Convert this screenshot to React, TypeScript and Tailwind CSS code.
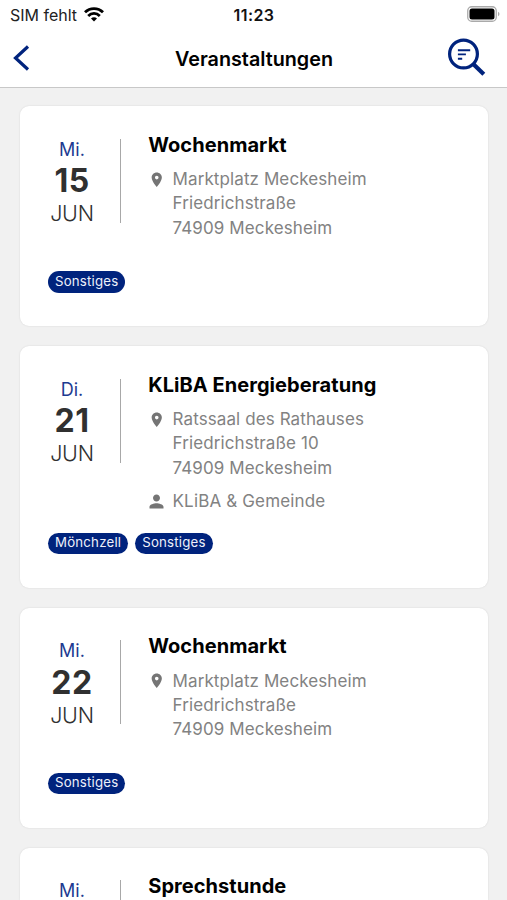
type Event = {
  weekday: string;
  day: string;
  month: string;
  title: string;
  address: string[];
  host?: string;
  tags: string[];
};

const events: Event[] = [
  {
    weekday: "Mi.",
    day: "15",
    month: "JUN",
    title: "Wochenmarkt",
    address: ["Marktplatz Meckesheim", "Friedrichstraße", "74909 Meckesheim"],
    tags: ["Sonstiges"],
  },
  {
    weekday: "Di.",
    day: "21",
    month: "JUN",
    title: "KLiBA Energieberatung",
    address: ["Ratssaal des Rathauses", "Friedrichstraße 10", "74909 Meckesheim"],
    host: "KLiBA & Gemeinde",
    tags: ["Mönchzell", "Sonstiges"],
  },
  {
    weekday: "Mi.",
    day: "22",
    month: "JUN",
    title: "Wochenmarkt",
    address: ["Marktplatz Meckesheim", "Friedrichstraße", "74909 Meckesheim"],
    tags: ["Sonstiges"],
  },
];

function WifiIcon() {
  return (
    <svg className="h-[15px] w-5" viewBox="0 0 20 15" fill="none" stroke="#000" strokeWidth="2.800">
      <path d="M1 5.300C6 .3 14 .3 19 5.300" />
      <path d="M4.200 8.900c3.300-3.300 8.300-3.300 11.600 0" />
      <path d="M10 14.400 7 11.500c1.700-1.600 4.300-1.600 6 0z" fill="#000" stroke="none" />
    </svg>
  );
}

function BatteryIcon() {
  return (
    <svg className="h-4 w-[33px]" viewBox="0 0 33 16">
      <rect x=".75" y=".75" width="28.500" height="14.500" rx="4" fill="#fff" stroke="#aaa" strokeWidth="1.300" />
      <rect x="2.500" y="2.500" width="25" height="11" rx="2.500" fill="#000" />
      <path d="M31 5.800c2 .8 2 3.600 0 4.400z" fill="#aaa" />
    </svg>
  );
}

function SearchIcon() {
  return (
    <svg className="h-10 w-10" viewBox="0 0 40 40" fill="none" stroke="#00237d">
      <circle cx="16.500" cy="16" r="13.900" strokeWidth="3.200" />
      <path d="m26 25.700 10.800 10.500" strokeWidth="4.200" />
      <path d="M10.900 12.200h12.300M10.900 16.400h8M10.900 20.700h4.300" strokeWidth="1.900" />
    </svg>
  );
}

function PinIcon() {
  return (
    <svg className="h-[17.5px] w-[17.5px]" viewBox="0 0 24 24" fill="#757575">
      <path d="M12 2C8.130 2 5 5.130 5 9c0 5.250 7 13 7 13s7-7.750 7-13c0-3.870-3.130-7-7-7zm0 9.500a2.500 2.500 0 1 1 0-5 2.500 2.500 0 0 1 0 5z" />
    </svg>
  );
}

function PersonIcon() {
  return (
    <svg className="h-[21px] w-[21px]" viewBox="0 0 24 24" fill="#757575">
      <path d="M12 12c2.210 0 4-1.790 4-4s-1.790-4-4-4-4 1.790-4 4 1.790 4 4 4zm0 2c-2.670 0-8 1.340-8 4v2h16v-2c0-2.660-5.330-4-8-4z" />
    </svg>
  );
}

function DateColumn({ weekday, day, month }: { weekday: string; day?: string; month?: string }) {
  return (
    <div className="mt-[32.5px] flex h-[84px] w-[73px] shrink-0 border-r-[1.5px] border-[#a8a8a8]">
      <div className="flex w-12 flex-col items-center">
        <span className="mt-px text-[18px] leading-[20px] text-[#1d3b91]">{weekday}</span>
        {day && (
          <span className="mt-[4.5px] text-[32px] leading-[34px] font-bold tracking-[0.5px] text-[#303030]">{day}</span>
        )}
        {month && (
          <span className="mt-[3px] text-[21.5px] leading-[24px] font-light tracking-[-0.2px] text-[#303030]">
            {month}
          </span>
        )}
      </div>
    </div>
  );
}

function Title({ children }: { children: string }) {
  return (
    <h2 className="mt-[25.75px] text-[20px] leading-[26px] font-bold tracking-[0.05px] whitespace-nowrap text-black">
      {children}
    </h2>
  );
}

function EventCard({ event }: { event: Event }) {
  return (
    <article
      className={`flex shrink-0 flex-col rounded-[9px] bg-white px-7 pb-[33.5px] shadow-[0_0_2px_rgba(0,0,0,0.12)] ${
        event.host ? "h-[241.5px]" : "h-[220px]"
      }`}
    >
      <div className="flex">
        <DateColumn weekday={event.weekday} day={event.day} month={event.month} />
        <div className="ml-[27.25px] flex flex-col">
          <Title>{event.title}</Title>
          <div className="mt-[9.5px] flex text-[17px] leading-[24.2px] tracking-[0.1px] text-[#828282]">
            <span className="flex w-[24.3px] pt-[3.5px]">
              <PinIcon />
            </span>
            <div>
              {event.address.map((line) => (
                <div key={line}>{line}</div>
              ))}
            </div>
          </div>
          {event.host && (
            <div className="mt-[9.5px] flex text-[17px] leading-[24.2px] tracking-[0.15px] text-[#828282]">
              <span className="-ml-0.5 flex w-[26.3px] pt-[2px]">
                <PersonIcon />
              </span>
              <span>{event.host}</span>
            </div>
          )}
        </div>
      </div>
      <div className="mt-auto flex gap-[7px]">
        {event.tags.map((tag) => (
          <span
            key={tag}
            className="flex h-[21.5px] items-center rounded-full bg-[#00237d] px-[7px] text-[13.25px] tracking-[0.2px] text-[#eef1fb]"
          >
            {tag}
          </span>
        ))}
      </div>
    </article>
  );
}

export default function App() {
  return (
    <div className="flex h-[900px] w-[507px] flex-col overflow-hidden bg-[#f1f1f1] font-['Inter',sans-serif]">
      <header className="flex h-[88px] shrink-0 flex-col border-b-[1.5px] border-[#c8c8c8] bg-white">
        <div className="grid h-[28px] grid-cols-[1fr_auto_1fr] items-center pt-px pr-[7px] pl-[10px]">
          <div className="flex items-center gap-[7px] text-[16px] text-[#222]">
            <span>SIM fehlt</span>
            <WifiIcon />
          </div>
          <span className="-ml-0.5 text-center text-[16px] font-semibold tracking-[0.4px] text-[#111]">11:23</span>
          <div className="flex justify-end pb-px">
            <BatteryIcon />
          </div>
        </div>
        <div className="grid h-[59px] grid-cols-[1fr_auto_1fr] items-center pt-px pr-5 pl-3">
          <svg className="h-7 w-[18px]" viewBox="0 0 18 28" fill="none" stroke="#00237d" strokeWidth="3.200">
            <path d="M16 2.500 3.500 14 16 25.500" />
          </svg>
          <h1 className="ml-[9px] pt-[3px] text-[19.75px] font-semibold text-black">Veranstaltungen</h1>
          <div className="flex justify-end">
            <SearchIcon />
          </div>
        </div>
      </header>
      <main className="flex min-h-0 flex-1 flex-col gap-[20px] pt-[18px] pr-[19px] pl-5">
        {events.map((event, index) => (
          <EventCard key={index} event={event} />
        ))}
        <article className="flex min-h-0 flex-1 overflow-hidden rounded-t-[9px] bg-white px-7 shadow-[0_0_2px_rgba(0,0,0,0.12)]">
          <DateColumn weekday="Mi." />
          <div className="ml-[27.25px]">
            <Title>Sprechstunde</Title>
          </div>
        </article>
      </main>
    </div>
  );
}
